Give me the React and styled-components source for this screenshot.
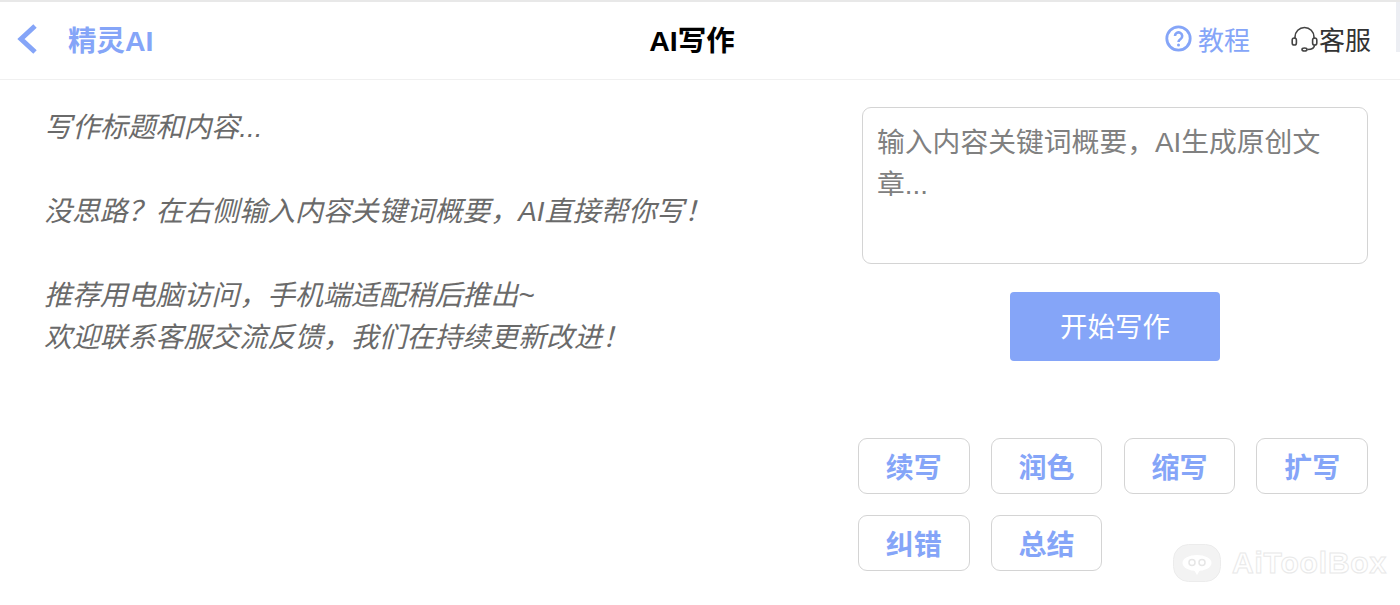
import React from "react";
import styled, { createGlobalStyle } from "styled-components";

const Global = createGlobalStyle`
  html, body { margin: 0; padding: 0; background: #fff; }
  body { font-family: "Liberation Sans", "Noto Sans CJK SC", sans-serif; overflow: hidden; }
`;
const Page = styled.div`
  position: relative;
  width: 1400px;
  height: 605px;
  border-top: 2px solid #e8e8e8;
  box-sizing: border-box;
  overflow: hidden;
`;
const ScrollThumb = styled.div`
  position: absolute;
  top: 0;
  right: 0;
  width: 4px;
  height: 50px;
  background: #eceef3;
`;
const Header = styled.header`
  display: grid;
  grid-template-columns: 1fr auto 1fr;
  align-items: center;
  box-sizing: border-box;
  height: 78px;
  padding: 0 32px 4px 16px;
  border-bottom: 1px solid #f0f0f0;
`;
const Back = styled.div`
  display: flex;
  align-items: center;
  gap: 30px;
  color: #85a5f8;
  font-size: 28.5px;
  font-weight: 700;
`;
const Title = styled.h1`
  margin: 0;
  font-size: 28.5px;
  font-weight: 700;
  color: #000;
`;
const HeaderLinks = styled.nav`
  display: flex;
  justify-content: flex-end;
  align-items: center;
  gap: 41px;
  margin-right: -3px;
`;
const HeaderLink = styled.span`
  display: flex;
  align-items: center;
  gap: ${(p) => p.$gap}px;
  font-size: 26px;
  color: ${(p) => p.$color};
`;
const Main = styled.main`
  display: flex;
  justify-content: space-between;
  padding: 27px 32px 0 44px;
`;
const Intro = styled.div`
  font-size: 27.9px;
  line-height: 42px;
  font-style: italic;
  color: #6a6a6a;
  white-space: pre-line;
`;
const Side = styled.section`
  width: 510px;
  display: flex;
  flex-direction: column;
`;
const Prompt = styled.textarea`
  display: block;
  box-sizing: border-box;
  width: 506px;
  height: 157px;
  margin-left: 4px;
  padding: 14px 26px 0 14px;
  border: 1px solid #d4d4d4;
  border-radius: 9px;
  font: inherit;
  font-size: 27.8px;
  line-height: 42px;
  resize: none;
  outline: none;
  &::placeholder { color: #808080; opacity: 1; }
`;
const Start = styled.button`
  align-self: flex-start;
  width: 210px;
  height: 69px;
  margin: 28px 0 0 152px;
  padding: 0 0 4px;
  border: 0;
  border-radius: 4px;
  background: #85a5f8;
  color: #fff;
  font: inherit;
  font-size: 27.5px;
`;
const Chips = styled.div`
  display: grid;
  grid-template-columns: repeat(4, 111.5px);
  justify-content: space-between;
  row-gap: 21px;
  margin-top: 77px;
`;
const Chip = styled.button`
  height: 56px;
  padding: 0;
  border: 1px solid #d4d4d4;
  border-radius: 9px;
  background: #fff;
  color: #85a5f8;
  font: inherit;
  font-size: 28px;
  font-weight: 700;
`;
const Watermark = styled.div`
  position: absolute;
  left: 1173px;
  top: 542px;
  display: flex;
  align-items: center;
  gap: 11px;
`;
const WatermarkText = styled.span`
  font-size: 30px;
  font-weight: 700;
  letter-spacing: 0.8px;
  color: #fff;
  -webkit-text-stroke: 1px #e9e9e9;
`;

const BackIcon = () => (
  <svg width="22" height="32" viewBox="0 0 22 32" fill="none">
    <path d="M19 3 5 16l14 13" stroke="#85a5f8" strokeWidth="5" />
  </svg>
);
const HelpIcon = () => (
  <svg width="27" height="27" viewBox="0 0 27 27" fill="none" stroke="#85a5f8">
    <circle cx="13.500" cy="13.500" r="11.700" strokeWidth="2.800" />
    <path d="M10 11a3.600 3.600 0 1 1 5.600 3c-1.400.9-2.100 1.500-2.100 3" strokeWidth="2.600" />
    <circle cx="13.500" cy="20" r="1.500" fill="#85a5f8" stroke="none" />
  </svg>
);
const HeadsetIcon = () => (
  <svg width="27" height="28" viewBox="0 0 27 28" fill="none" stroke="#444" strokeWidth="1.600">
    <path d="M4 14V12a9.500 9.500 0 0 1 19 0v2" />
    <rect x="1.200" y="13" width="4.200" height="7" rx="2.100" />
    <rect x="21.600" y="13" width="4.200" height="7" rx="2.100" />
    <path d="M23.500 20c0 3-3 4.500-7 4.500" />
    <ellipse cx="13.500" cy="24.500" rx="2.500" ry="1.500" />
  </svg>
);
const BubbleIcon = () => (
  <svg width="48" height="38" viewBox="0 0 48 38" fill="none">
    <rect x="0.500" y="0.500" width="47" height="37" rx="15" fill="#f3f3f3" stroke="#ececec" />
    <ellipse cx="24" cy="19" rx="14.500" ry="8" fill="#fff" />
    <path d="M21 26h6l-3 5z" fill="#fff" />
    <circle cx="19" cy="18.500" r="3" stroke="#e6e6e6" strokeWidth="1.500" />
    <circle cx="29" cy="18.500" r="3" stroke="#e6e6e6" strokeWidth="1.500" />
  </svg>
);

const chips = ["续写", "润色", "缩写", "扩写", "纠错", "总结"];

export default function App() {
  return (
    <Page>
      <Global />
      <ScrollThumb />
      <Header>
        <Back>
          <BackIcon />
          <span>精灵AI</span>
        </Back>
        <Title>AI写作</Title>
        <HeaderLinks>
          <HeaderLink $color="#85a5f8" $gap={6}>
            <HelpIcon />
            教程
          </HeaderLink>
          <HeaderLink $color="#333" $gap={1}>
            <HeadsetIcon />
            客服
          </HeaderLink>
        </HeaderLinks>
      </Header>
      <Main>
        <Intro>
          {"写作标题和内容...\n\n没思路？在右侧输入内容关键词概要，AI直接帮你写！\n\n推荐用电脑访问，手机端适配稍后推出~\n欢迎联系客服交流反馈，我们在持续更新改进！"}
        </Intro>
        <Side>
          <Prompt placeholder="输入内容关键词概要，AI生成原创文章..." />
          <Start>开始写作</Start>
          <Chips>
            {chips.map((c) => (
              <Chip key={c}>{c}</Chip>
            ))}
          </Chips>
        </Side>
      </Main>
      <Watermark>
        <BubbleIcon />
        <WatermarkText>AiToolBox</WatermarkText>
      </Watermark>
    </Page>
  );
}
